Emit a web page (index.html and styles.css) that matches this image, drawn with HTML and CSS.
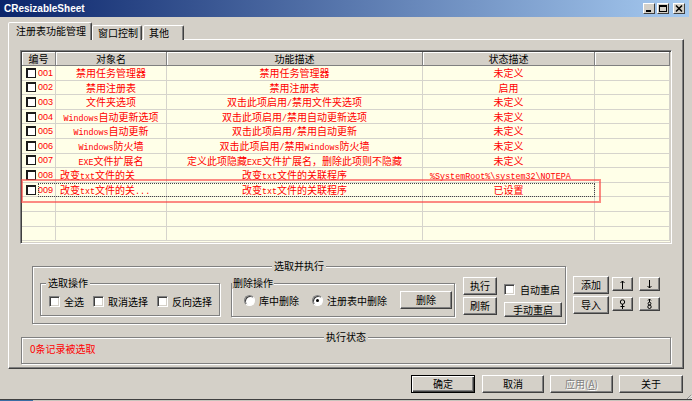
FILE: index.html
```html
<!DOCTYPE html>
<html lang="zh-CN">

<head>
    <meta charset="UTF-8">
    <title>CResizableSheet</title>
    <link rel="stylesheet" href="styles.css">
</head>

<body>
    <div class="window">
        <!-- 标题栏 -->
        <div class="titlebar">
            <span class="title">CResizableSheet</span>
            <div class="caption-btns">
                <span class="cbtn"><svg width="8" height="7" viewBox="0 0 8 7"><rect x="1" y="5" width="5" height="2" fill="#000"/></svg></span>
                <span class="cbtn max"><svg width="8" height="7" viewBox="0 0 8 7"><rect x="0.5" y="0.5" width="7" height="6" fill="none" stroke="#000"/><rect x="0" y="0" width="8" height="2" fill="#000"/></svg></span>
                <span class="cbtn close"><svg width="8" height="7" viewBox="0 0 8 7"><path d="M1 0.5 L7 6.5 M7 0.5 L1 6.5" stroke="#000" stroke-width="1.5"/></svg></span>
            </div>
        </div>

        <!-- 选项卡 -->
        <div class="tabs">
            <div class="tab active">注册表功能管理</div>
            <div class="tab t2">窗口控制</div>
            <div class="tab t3">其他</div>
        </div>

        <div class="page">
            <!-- 列表 -->
            <div class="grid">
                <div class="row head">
                    <div class="h">编号</div>
                    <div class="h">对象名</div>
                    <div class="h">功能描述</div>
                    <div class="h">状态描述</div>
                    <div class="h"></div>
                </div>
                <div class="row">
                    <div class="c id"><i class="lv-check"></i><span class="num">001</span></div>
                    <div class="c">禁用任务管理器</div>
                    <div class="c">禁用任务管理器</div>
                    <div class="c">未定义</div>
                    <div class="c"></div>
                </div>
                <div class="row">
                    <div class="c id"><i class="lv-check"></i><span class="num">002</span></div>
                    <div class="c">禁用注册表</div>
                    <div class="c">禁用注册表</div>
                    <div class="c">启用</div>
                    <div class="c"></div>
                </div>
                <div class="row">
                    <div class="c id"><i class="lv-check"></i><span class="num">003</span></div>
                    <div class="c">文件夹选项</div>
                    <div class="c">双击此项启用<span class="en">/</span>禁用文件夹选项</div>
                    <div class="c">未定义</div>
                    <div class="c"></div>
                </div>
                <div class="row">
                    <div class="c id"><i class="lv-check"></i><span class="num">004</span></div>
                    <div class="c"><span class="en">Windows</span>自动更新选项</div>
                    <div class="c">双击此项启用<span class="en">/</span>禁用自动更新选项</div>
                    <div class="c">未定义</div>
                    <div class="c"></div>
                </div>
                <div class="row">
                    <div class="c id"><i class="lv-check"></i><span class="num">005</span></div>
                    <div class="c"><span class="en">Windows</span>自动更新</div>
                    <div class="c">双击此项启用<span class="en">/</span>禁用自动更新</div>
                    <div class="c">未定义</div>
                    <div class="c"></div>
                </div>
                <div class="row">
                    <div class="c id"><i class="lv-check"></i><span class="num">006</span></div>
                    <div class="c"><span class="en">Windows</span>防火墙</div>
                    <div class="c">双击此项启用<span class="en">/</span>禁用<span class="en">Windows</span>防火墙</div>
                    <div class="c">未定义</div>
                    <div class="c"></div>
                </div>
                <div class="row">
                    <div class="c id"><i class="lv-check"></i><span class="num">007</span></div>
                    <div class="c"><span class="en">EXE</span>文件扩展名</div>
                    <div class="c">定义此项隐藏<span class="en">EXE</span>文件扩展名，删除此项则不隐藏</div>
                    <div class="c">未定义</div>
                    <div class="c"></div>
                </div>
                <div class="row">
                    <div class="c id"><i class="lv-check"></i><span class="num">008</span></div>
                    <div class="c left">改变<span class="en">txt</span>文件的关</div>
                    <div class="c">改变<span class="en">txt</span>文件的关联程序</div>
                    <div class="c left path"><span class="en">%SystemRoot%\system32\NOTEPA</span></div>
                    <div class="c"></div>
                </div>
                <div class="row focus">
                    <div class="c id"><i class="lv-check"></i><span class="num">009</span></div>
                    <div class="c left">改变<span class="en">txt</span>文件的关<span class="en">...</span></div>
                    <div class="c">改变<span class="en">txt</span>文件的关联程序</div>
                    <div class="c">已设置</div>
                    <div class="c"></div>
                </div>
                <div class="row"><div class="c"></div><div class="c"></div><div class="c"></div><div class="c"></div><div class="c"></div></div>
                <div class="row"><div class="c"></div><div class="c"></div><div class="c"></div><div class="c"></div><div class="c"></div></div>
                <div class="row"><div class="c"></div><div class="c"></div><div class="c"></div><div class="c"></div><div class="c"></div></div>
            </div>

            <!-- 选取并执行 -->
            <div class="ops">
                <fieldset class="group exec">
                    <legend class="center">选取并执行</legend>
                    <div class="exec-body">
                        <fieldset class="group pick">
                            <legend>选取操作</legend>
                            <div class="line">
                                <i class="check"></i><span class="lbl">全选</span>
                                <i class="check"></i><span class="lbl">取消选择</span>
                                <i class="check"></i><span class="lbl last">反向选择</span>
                            </div>
                        </fieldset>
                        <fieldset class="group del">
                            <legend>删除操作</legend>
                            <div class="line">
                                <i class="radio"></i><span class="lbl r1">库中删除</span>
                                <i class="radio on"></i><span class="lbl r2">注册表中删除</span>
                                <button class="btn del-btn">删除</button>
                            </div>
                        </fieldset>
                        <div class="col run">
                            <button class="btn">执行</button>
                            <button class="btn">刷新</button>
                        </div>
                        <div class="col auto">
                            <div class="line"><i class="check"></i><span class="lbl">自动重启</span></div>
                            <button class="btn manual">手动重启</button>
                        </div>
                    </div>
                </fieldset>

                <div class="side">
                    <div class="side-row">
                        <button class="btn wide">添加</button>
                        <button class="btn arrow first"><svg width="7" height="9" viewBox="0 0 7 9"><path d="M3.5 1 V9 M1.5 3 L3.5 1 L5.5 3" stroke="#000" fill="none"/></svg></button>
                        <button class="btn arrow"><svg width="7" height="9" viewBox="0 0 7 9"><path d="M3.5 0 V8 M1.5 6 L3.5 8 L5.5 6" stroke="#000" fill="none"/></svg></button>
                    </div>
                    <div class="side-row">
                        <button class="btn wide">导入</button>
                        <button class="btn arrow first"><svg width="7" height="10" viewBox="0 0 7 10"><circle cx="3.5" cy="3" r="2.2" stroke="#000" fill="none"/><path d="M3.5 5 V10 M1.5 7.5 H5.5" stroke="#000"/></svg></button>
                        <button class="btn arrow"><svg width="7" height="10" viewBox="0 0 7 10"><path d="M3.5 0 V3 M2 1.5 L3.5 0 L5 1.5" stroke="#000" fill="none"/><circle cx="3.5" cy="4.6" r="1.4" stroke="#000" fill="none"/><circle cx="3.5" cy="7.8" r="1.7" stroke="#000" fill="none"/></svg></button>
                    </div>
                </div>
            </div>

            <!-- 执行状态 -->
            <fieldset class="group status">
                <legend class="center">执行状态</legend>
                <div class="msg">0条记录被选取</div>
            </fieldset>
        </div>

        <!-- 底部按钮 -->
        <div class="footer">
            <button class="btn default">确定</button>
            <button class="btn cancel">取消</button>
            <button class="btn apply" disabled>应用(<u>A</u>)</button>
            <button class="btn about">关于</button>
            <svg class="grip" width="9" height="9" viewBox="0 0 9 9">
                <path d="M8 1 L1 8 M8 4 L4 8 M8 7 L7 8" stroke="#808080"/>
                <path d="M9 2 L2 9 M9 5 L5 9" stroke="#fff"/>
            </svg>
        </div>
        <div class="desk"><span class="desk-blue"></span></div>

        <!-- 标注框 -->
        <div class="mark"></div>
    </div>
</body>

</html>
```

FILE: styles.css
```css
/* 窗口整体 */
body {
    margin: 0;
    background: #d4d0c8;
    font-family: "Noto Sans CJK SC", sans-serif;
    font-size: 10px;
    color: #000;
}

.window {
    position: relative;
    width: 692px;
    height: 401px;
    overflow: hidden;
    display: flex;
    flex-direction: column;
}

/* 标题栏 */
.titlebar {
    flex: none;
    width: 689px;
    height: 17px;
    box-sizing: border-box;
    padding: 0 4px;
    display: flex;
    align-items: center;
    justify-content: space-between;
    background: linear-gradient(to right, #0a246a, #a6caf0);
}

.title {
    color: #fff;
    font: bold 10px "Liberation Sans", sans-serif;
}

.caption-btns {
    display: flex;
}

.cbtn {
    width: 12px;
    height: 11px;
    box-sizing: border-box;
    background: #d4d0c8;
    border: 1px solid;
    border-color: #fff #404040 #404040 #fff;
    display: flex;
    align-items: center;
    justify-content: center;
}

.cbtn.max {
    margin-left: 2px;
}

.cbtn.close {
    margin-left: 4px;
}

/* 选项卡 */
.tabs {
    flex: none;
    display: flex;
    align-items: flex-end;
    height: 18px;
    margin: 5px 0 -1px 8px;
    position: relative;
    z-index: 1;
}

.tab {
    height: 15px;
    box-sizing: border-box;
    border: 1px solid;
    border-bottom: none;
    border-color: #fff #404040 transparent #fff;
    box-shadow: inset -1px 0 #808080;
    border-radius: 2px 2px 0 0;
    line-height: 13px;
    padding-left: 5px;
    background: #d4d0c8;
}

.tab.active {
    width: 84px;
    height: 18px;
    line-height: 16px;
    padding-left: 7px;
}

.tab.t2 {
    width: 50px;
}

.tab.t3 {
    width: 41px;
    margin-left: 1px;
}

/* 选项卡页面 */
.page {
    flex: none;
    margin-left: 8px;
    width: 676px;
    height: 330px;
    box-sizing: border-box;
    border: 1px solid;
    border-color: #fff #404040 #404040 #fff;
    box-shadow: inset -1px -1px #808080;
}

/* 列表 */
.grid {
    margin: 10px 0 0 11px;
    width: 652px;
    height: 194px;
    box-sizing: border-box;
    padding: 1px;
    border: 1px solid;
    border-color: #808080 #fff #fff #808080;
    box-shadow: inset 1px 1px #404040, inset -1px -1px #d4d0c8;
    background: #ffffe8;
    overflow: hidden;
}

.row {
    display: grid;
    grid-template-columns: 34px 111px 256px 172px 75px;
    height: 14.6px;
}

.row.head {
    height: 14px;
}

.h {
    background: #d4d0c8;
    box-sizing: border-box;
    border-right: 1px solid #808080;
    border-bottom: 1px solid #808080;
    box-shadow: inset 1px 1px #fff;
    text-align: center;
    line-height: 13px;
}

.c {
    box-sizing: border-box;
    border-right: 1px solid #d6d4cc;
    border-bottom: 1px solid #d6d4cc;
    text-align: center;
    white-space: nowrap;
    overflow: hidden;
    line-height: 13.6px;
    color: #f00;
}

.c.id {
    display: flex;
    align-items: center;
    padding-left: 4px;
    text-align: left;
}

.c.left {
    text-align: left;
    padding-left: 4px;
}

.c.path {
    padding-left: 7px;
}

.lv-check {
    width: 10px;
    height: 10px;
    box-sizing: border-box;
    border: 2px solid #1a1a1a;
    border-width: 2px 1px 1px 2px;
    background: #fff;
    margin-right: 2px;
    flex: none;
}

.num {
    font: 9px "Liberation Sans", sans-serif;
}

.en {
    font-family: "Liberation Mono", monospace;
    font-size: 8.4px;
}

/* 当前行焦点框 */
.row.focus {
    position: relative;
}

.row.focus::after {
    content: "";
    position: absolute;
    left: 16px;
    width: 557px;
    top: 0;
    bottom: 0;
    border: 1px dotted #444;
    box-sizing: border-box;
}

/* 分组框 */
.group {
    margin: 0;
    padding: 0;
    min-width: 0;
    box-sizing: border-box;
    border: 1px solid #808080;
    box-shadow: inset 1px 1px #fff, 1px 1px #fff;
}

.group legend {
    padding: 0 2px;
    line-height: 12px;
    background: #d4d0c8;
}

.group legend.center {
    margin: 0 auto;
}

.ops {
    display: flex;
    align-items: flex-start;
    margin-top: 16px;
}

.exec {
    margin-left: 23px;
    width: 534px;
    height: 64px;
}

.exec-body {
    display: flex;
    align-items: flex-start;
}

.line {
    display: flex;
    align-items: center;
    white-space: nowrap;
}

.pick {
    margin: 5px 0 0 7px;
    width: 180px;
    height: 39px;
}

.pick legend {
    margin-left: 5px;
}

.pick .line {
    padding: 5px 0 0 8px;
}

.check {
    width: 11px;
    height: 11px;
    box-sizing: border-box;
    background: #fff;
    border: 1px solid;
    border-color: #808080 #fff #fff #808080;
    box-shadow: inset 1px 1px #404040, inset -1px -1px #d4d0c8;
    flex: none;
}

.lbl {
    flex: none;
    margin: 0 9px 0 4px;
}

.lbl.last {
    margin-right: 0;
}

.del {
    margin: 5px 0 0 11px;
    width: 224px;
    height: 40px;
}

.del legend {
    padding: 0 1px;
}

.del .line {
    padding: 2px 0 0 12px;
}

.radio {
    width: 11px;
    height: 11px;
    box-sizing: border-box;
    border-radius: 50%;
    background: #fff;
    border: 1px solid;
    border-color: #808080 #fff #fff #808080;
    box-shadow: inset 1px 1px #404040;
    display: flex;
    align-items: center;
    justify-content: center;
    flex: none;
}

.radio.on::after {
    content: "";
    width: 3px;
    height: 3px;
    border-radius: 50%;
    background: #000;
}

.lbl.r1 {
    margin-right: 13px;
}

.lbl.r2 {
    margin-right: 13px;
}

/* 按钮 */
.btn {
    flex: none;
    height: 18px;
    box-sizing: border-box;
    padding: 0;
    background: #d4d0c8;
    border: 1px solid;
    border-color: #fff #404040 #404040 #fff;
    box-shadow: inset -1px -1px #808080;
    font-family: inherit;
    font-size: 10px;
    line-height: 12px;
    color: #000;
    display: flex;
    align-items: center;
    justify-content: center;
}

.del-btn {
    width: 52px;
}

.col {
    display: flex;
    flex-direction: column;
}

.run {
    margin: 5px 0 0 8px;
    gap: 2px;
}

.run .btn {
    width: 34px;
}

.auto {
    margin: 10px 0 0 7px;
}

.auto .lbl {
    margin: 0 0 0 5px;
}

.manual {
    width: 58px;
    height: 15px;
    margin-top: 5px;
}

.side {
    margin: 16px 0 0 7px;
    display: flex;
    flex-direction: column;
    gap: 2px;
}

.side-row {
    display: flex;
    align-items: flex-start;
}

.btn.wide {
    width: 36px;
}

.btn.arrow {
    width: 21px;
    height: 14px;
    margin: 1px 0 0 6px;
}

.btn.arrow.first {
    margin-left: 3px;
}

.status {
    margin: 7px 0 0 12px;
    width: 650px;
    height: 33px;
}

.msg {
    color: #f00;
    line-height: 12px;
    padding-left: 8px;
}

/* 底部按钮 */
.footer {
    flex: none;
    display: flex;
    align-items: flex-start;
    height: 24px;
    margin-top: 6px;
    padding-left: 411px;
}

.footer .btn {
    width: 63px;
    margin-right: 6px;
}

.btn.default {
    width: 64px;
    margin-right: 7px;
    border: 1px solid #000;
    box-shadow: inset 1px 1px #fff, inset -1px -1px #404040, inset -2px -2px #808080;
}

.btn.cancel {
    width: 62px;
}

.btn.apply {
    color: #808080;
    text-shadow: 1px 1px #fff;
}

.footer .btn.about {
    width: 64px;
    margin-right: 0;
}

.grip {
    align-self: flex-end;
    margin: 0 0 -3px 2px;
}

.desk {
    flex: none;
    height: 4px;
    border-top: 1px solid #404040;
    background: #c8c4bc;
    display: flex;
}

.desk-blue {
    width: 33px;
    background: #3a6ea5;
}

/* 红色标注框 */
.mark {
    position: absolute;
    left: 21px;
    top: 179px;
    width: 580px;
    height: 24px;
    box-sizing: border-box;
    border: 2px solid rgba(250, 60, 60, 0.6);
}
```
